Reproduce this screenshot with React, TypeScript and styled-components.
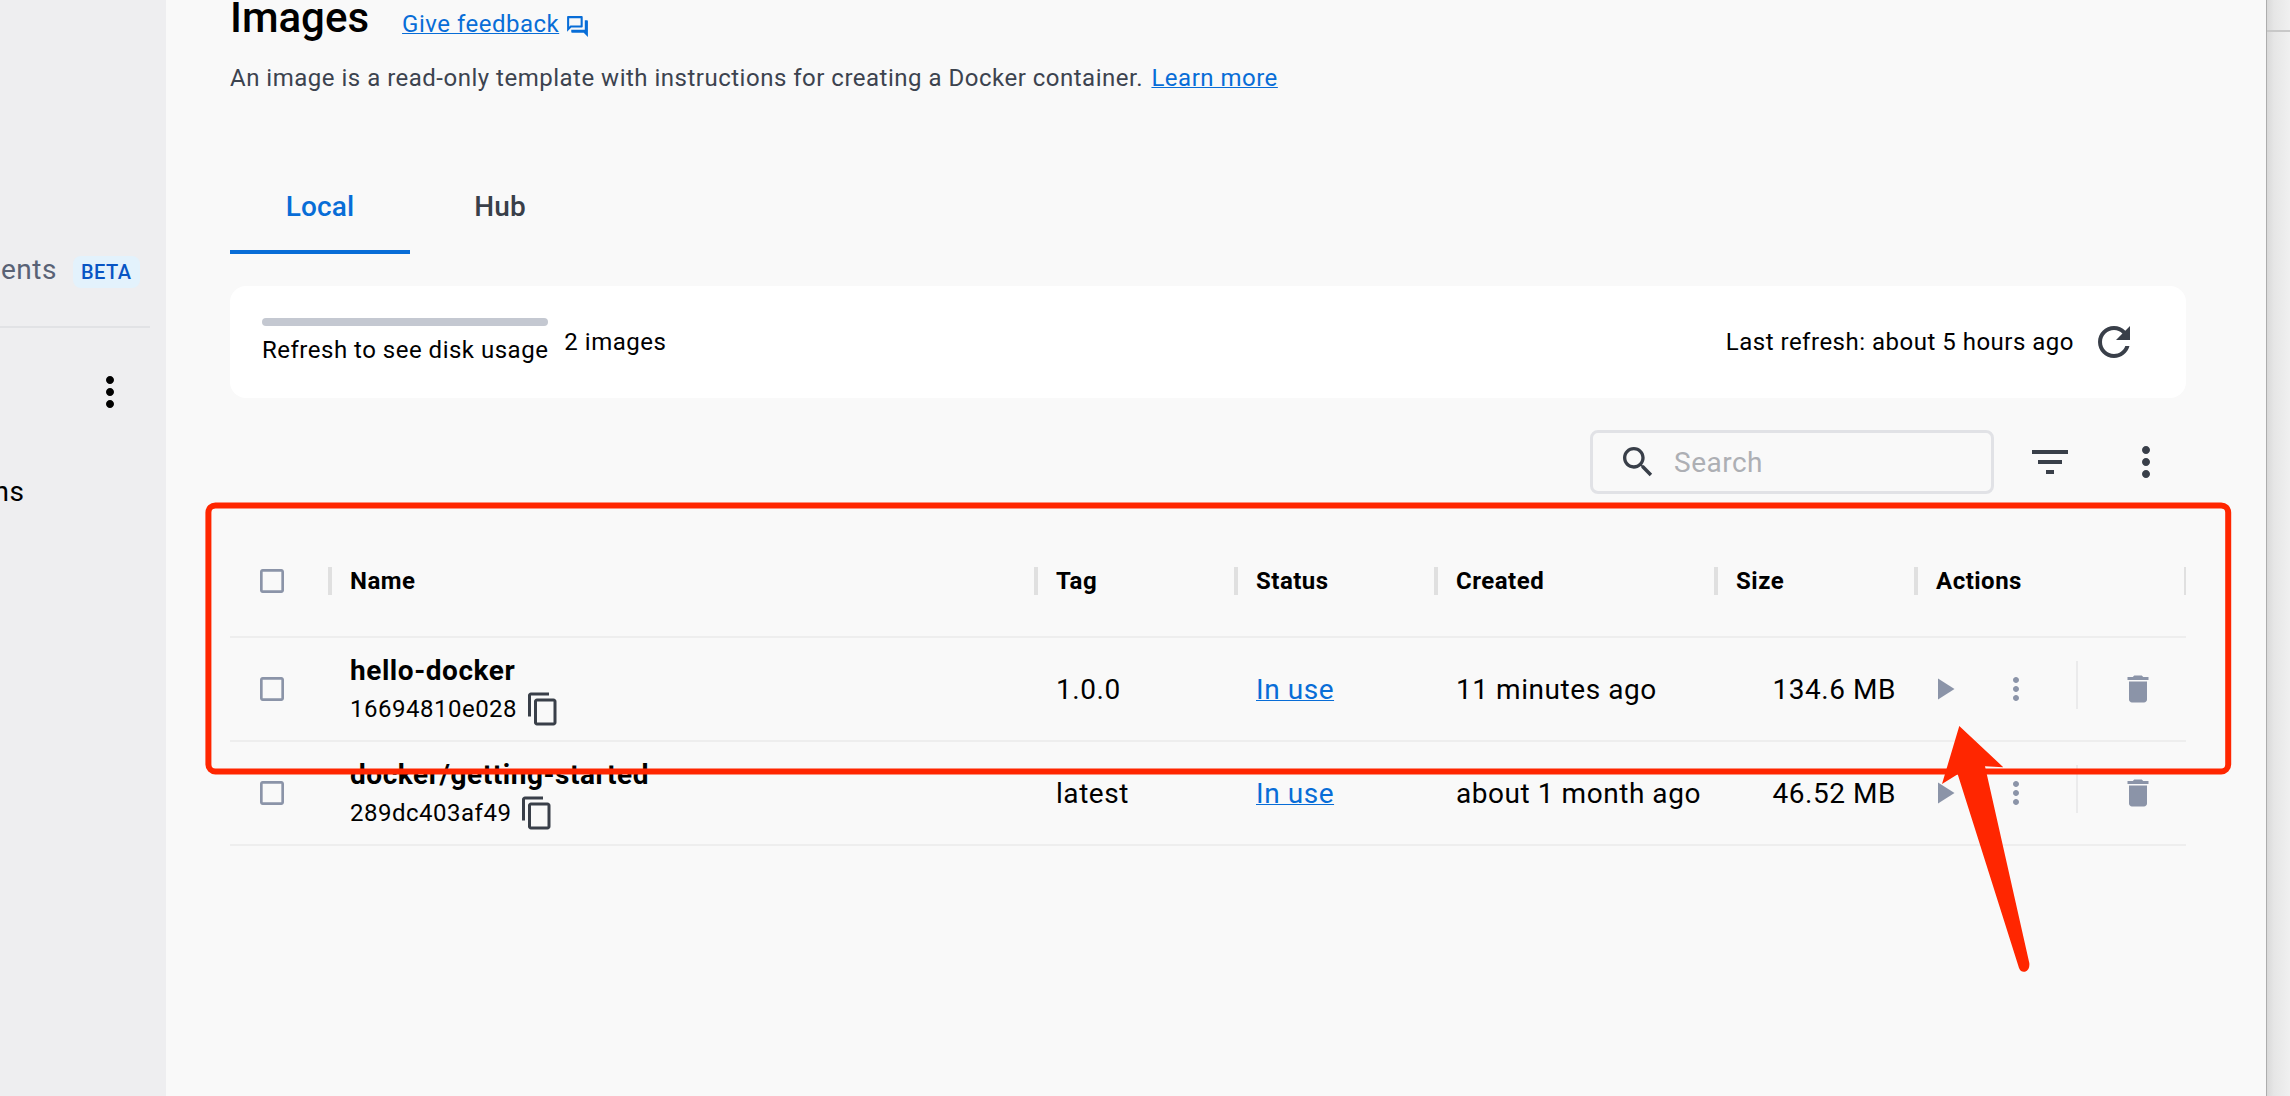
import React from "react";
import styled, { createGlobalStyle } from "styled-components";

const GlobalStyle = createGlobalStyle`
  * { box-sizing: border-box; }
  html, body { margin: 0; padding: 0; }
  body {
    font-family: Roboto, "Liberation Sans", sans-serif;
    font-size: 28px;
    letter-spacing: 0.5px;
    color: #000;
    background: #f9f9f9;
  }
`;

const Screen = styled.div`
  position: relative;
  display: flex;
  width: 2290px;
  height: 1096px;
  overflow: hidden;
`;

const Sidebar = styled.aside`
  display: flex;
  flex-direction: column;
  width: 166px;
  flex: none;
  padding-top: 248px;
  overflow: hidden;
  background: #eeeef0;
`;

const NavRow = styled.div`
  display: flex;
  align-items: center;
  gap: 16px;
  height: 48px;
  padding-left: 1px;
  color: #596275;
`;

const NavLabel = styled.span`
  padding-bottom: 5px;
`;

const Beta = styled.span`
  height: 32px;
  padding: 0 8px;
  border-radius: 8px;
  background: #e3f2fc;
  color: #0855c4;
  font-size: 20px;
  font-weight: 500;
  line-height: 33px;
`;

const SideDivider = styled.hr`
  width: 150px;
  height: 2px;
  margin: 30px 0 40px;
  border: 0;
  background: #e1e2e5;
`;

const SideMenu = styled.div`
  display: flex;
  height: 48px;
  padding-left: 86px;
`;

const SideItem = styled.div`
  margin: 59px 0 0 -6.5px;
  line-height: 33px;
`;

const Main = styled.main`
  width: 2100px;
  flex: none;
  padding: 0 80px 0 64px;
  background: #f9f9f9;
`;

const TitleRow = styled.header`
  display: flex;
  height: 50px;
`;

const Title = styled.h1`
  margin: 0 33px 0 0;
  font-size: 42px;
  font-weight: 500;
  line-height: 36px;
  letter-spacing: 0;
`;

const Link = styled.a`
  color: #086dd7;
  text-decoration: underline;
  text-decoration-thickness: 1px;
  text-underline-offset: 1px;
`;

const Feedback = styled.div`
  display: flex;
  align-items: flex-start;
  gap: 6px;
  padding-top: 10px;
  font-size: 24px;
  line-height: 29px;
`;

const FeedbackIcon = styled.span`
  display: flex;
  padding-top: 4px;
`;

const Subtitle = styled.p`
  margin: 0;
  padding-top: 14px;
  height: 122px;
  font-size: 24px;
  line-height: 29px;
  color: #3c434f;
`;

const LearnMore = styled(Link)`
  margin-left: 2px;
`;

const Tabs = styled.nav`
  display: flex;
  height: 82px;
`;

const Tab = styled.button<{ $active?: boolean }>`
  width: 180px;
  padding: 0 0 9px;
  border: 0;
  border-bottom: 4px solid ${(p) => (p.$active ? "#086dd7" : "transparent")};
  background: none;
  color: ${(p) => (p.$active ? "#086dd7" : "#393f49")};
  font: 500 28px Roboto, sans-serif;
  letter-spacing: 0.1px;
`;

const UsageCard = styled.section`
  display: flex;
  align-items: center;
  height: 112px;
  margin-top: 32px;
  padding: 0 48px 0 32px;
  border-radius: 16px;
  background: #fff;
  font-size: 24px;
  line-height: 32px;
`;

const DiskUsage = styled.div`
  display: flex;
  flex-direction: column;
  gap: 8px;
  margin-right: 16px;
`;

const UsageBar = styled.div`
  height: 8px;
  border-radius: 4px;
  background: #c4c8d1;
`;

const Refresh = styled.div`
  display: flex;
  align-items: center;
  gap: 16px;
  margin-left: auto;
`;

const Toolbar = styled.div`
  display: flex;
  align-items: center;
  justify-content: flex-end;
  height: 64px;
  margin-top: 32px;
  padding-right: 16px;
`;

const SearchBox = styled.div`
  display: flex;
  align-items: center;
  gap: 16px;
  width: 404px;
  height: 64px;
  margin-right: 32px;
  padding-left: 25px;
  border: 3px solid #e1e2e6;
  border-radius: 8px;
  color: #adafb4;
`;

const ToolButtons = styled.div`
  display: flex;
  gap: 48px;
`;

const Table = styled.div`
  margin-top: 32px;
  letter-spacing: 0.55px;
`;

const Row = styled.div<{ $head?: boolean }>`
  display: grid;
  grid-template-columns: 100px 706px 200px 200px 280px 200px 270px;
  height: ${(p) => (p.$head ? 112 : 104)}px;
  border-bottom: 2px solid #eeeeee;
`;

const HeadCell = styled.div<{ $first?: boolean }>`
  display: flex;
  align-items: center;
  font-size: 24px;
  font-weight: 700;
  letter-spacing: 0.5px;
  &::before,
  &::after {
    content: "";
    width: 2px;
    height: 28px;
    background: ${(p) => (p.$first ? "transparent" : "#e0e0e0")};
  }
  &::after {
    background: #e0e0e0;
  }
`;

const HeadLabel = styled.span`
  flex: 1;
  padding-left: 18px;
`;

const CheckSlot = styled.span`
  display: flex;
  flex: 1;
  padding-left: 24px;
`;

const Cell = styled.div<{ $end?: boolean }>`
  display: flex;
  align-items: center;
  justify-content: ${(p) => (p.$end ? "flex-end" : "flex-start")};
  padding: 0 20px;
  white-space: nowrap;
`;

const CheckCell = styled.div`
  display: flex;
  align-items: center;
  padding-left: 26px;
`;

const NameCell = styled.div`
  display: flex;
  flex-direction: column;
  padding: 16px 20px 0;
`;

const ImageName = styled.span`
  font-weight: 700;
  line-height: 34px;
`;

const ImageId = styled.span`
  display: flex;
  align-items: center;
  gap: 8px;
  height: 42px;
  font-size: 24px;
  letter-spacing: 0.5px;
`;

const ActionsCell = styled.div`
  display: flex;
  align-items: center;
  padding-left: 10px;
`;

const RowDivider = styled.span`
  width: 2px;
  height: 48px;
  margin: 0 42px 8px;
  background: #ebebec;
`;

const KebabSlot = styled.span`
  display: flex;
  margin-left: 36px;
`;

const Desktop = styled.aside`
  flex: 1;
  border-left: 1px solid #adadad;
  background: linear-gradient(90deg, #d9d9d9, #e6e6e6 30%, #f0f0f0);
`;

const DesktopLine = styled.div`
  height: 2px;
  margin-top: 30px;
  background: #c8c8c8;
`;

const Annotation = styled.svg`
  position: absolute;
  inset: 0;
  pointer-events: none;
`;

const icons = {
  more: "M12 8c1.1 0 2-.9 2-2s-.9-2-2-2-2 .9-2 2 .9 2 2 2zm0 2c-1.1 0-2 .9-2 2s.9 2 2 2 2-.9 2-2-.9-2-2-2zm0 6c-1.1 0-2 .9-2 2s.9 2 2 2 2-.9 2-2-.9-2-2-2z",
  refresh:
    "M17.65 6.35C16.2 4.9 14.21 4 12 4c-4.42 0-7.99 3.58-7.99 8s3.57 8 7.99 8c3.73 0 6.84-2.55 7.73-6h-2.08c-.82 2.33-3.04 4-5.65 4-3.31 0-6-2.69-6-6s2.69-6 6-6c1.66 0 3.14.69 4.22 1.78L13 11h7V4l-2.35 2.35z",
  search:
    "M15.5 14h-.79l-.28-.27C15.41 12.59 16 11.11 16 9.5 16 5.91 13.09 3 9.5 3S3 5.91 3 9.5 5.91 16 9.5 16c1.61 0 3.09-.59 4.23-1.57l.27.28v.79l5 4.99L20.49 19l-4.99-5zm-6 0C7.01 14 5 11.99 5 9.5S7.01 5 9.5 5 14 7.01 14 9.5 11.99 14 9.5 14z",
  filter: "M10 18h4v-2h-4v2zM3 6v2h18V6H3zm3 7h12v-2H6v2z",
  checkbox:
    "M19 5v14H5V5h14m0-2H5c-1.1 0-2 .9-2 2v14c0 1.1.9 2 2 2h14c1.1 0 2-.9 2-2V5c0-1.1-.9-2-2-2z",
  copy: "M16 1H4c-1.1 0-2 .9-2 2v14h2V3h12V1zm3 4H8c-1.1 0-2 .9-2 2v14c0 1.1.9 2 2 2h11c1.1 0 2-.9 2-2V7c0-1.1-.9-2-2-2zm0 16H8V7h11v14z",
  play: "M8 5v14l11-7z",
  trash: "M6 19c0 1.1.9 2 2 2h8c1.1 0 2-.9 2-2V7H6v12zM19 4h-3.5l-1-1h-5l-1 1H5v2h14V4z",
  chat: "M15 4v7H5.17L4 12.17V4h11m1-2H3c-.55 0-1 .45-1 1v14l4-4h10c.55 0 1-.45 1-1V3c0-.55-.45-1-1-1zm5 4h-2v9H6v2c0 .55.45 1 1 1h11l4 4V7c0-.55-.45-1-1-1z",
};

function Icon({ name, size, color }: { name: keyof typeof icons; size: number; color: string }) {
  return (
    <svg width={size} height={size} viewBox="0 0 24 24" fill={color} aria-hidden="true">
      <path d={icons[name]} />
    </svg>
  );
}

const columns = ["Name", "Tag", "Status", "Created", "Size", "Actions"];

const images = [
  { name: "hello-docker", id: "16694810e028", tag: "1.0.0", created: "11 minutes ago", size: "134.6 MB" },
  { name: "docker/getting-started", id: "289dc403af49", tag: "latest", created: "about 1 month ago", size: "46.52 MB" },
];

const slate = "#393f49";
const muted = "#8b94a8";

export default function App() {
  return (
    <Screen>
      <GlobalStyle />
      <Sidebar>
        <NavRow>
          <NavLabel>ents</NavLabel>
          <Beta>BETA</Beta>
        </NavRow>
        <SideDivider />
        <SideMenu>
          <Icon name="more" size={48} color="#000" />
        </SideMenu>
        <SideItem>ns</SideItem>
      </Sidebar>

      <Main>
        <TitleRow>
          <Title>Images</Title>
          <Feedback>
            <Link>Give feedback</Link>
            <FeedbackIcon>
              <Icon name="chat" size={25} color="#086dd7" />
            </FeedbackIcon>
          </Feedback>
        </TitleRow>
        <Subtitle>
          An image is a read-only template with instructions for creating a Docker container.{" "}
          <LearnMore>Learn more</LearnMore>
        </Subtitle>
        <Tabs>
          <Tab $active>Local</Tab>
          <Tab>Hub</Tab>
        </Tabs>

        <UsageCard>
          <DiskUsage>
            <UsageBar />
            <span>Refresh to see disk usage</span>
          </DiskUsage>
          <span>2 images</span>
          <Refresh>
            <span>Last refresh: about 5 hours ago</span>
            <Icon name="refresh" size={48} color={slate} />
          </Refresh>
        </UsageCard>

        <Toolbar>
          <SearchBox>
            <Icon name="search" size={40} color={slate} />
            <span>Search</span>
          </SearchBox>
          <ToolButtons>
            <Icon name="filter" size={48} color={slate} />
            <Icon name="more" size={48} color={slate} />
          </ToolButtons>
        </Toolbar>

        <Table>
          <Row $head>
            <HeadCell $first>
              <CheckSlot>
                <Icon name="checkbox" size={32} color={muted} />
              </CheckSlot>
            </HeadCell>
            {columns.map((label) => (
              <HeadCell key={label}>
                <HeadLabel>{label}</HeadLabel>
              </HeadCell>
            ))}
          </Row>
          {images.map((image) => (
            <Row key={image.id}>
              <CheckCell>
                <Icon name="checkbox" size={32} color={muted} />
              </CheckCell>
              <NameCell>
                <ImageName>{image.name}</ImageName>
                <ImageId>
                  {image.id}
                  <Icon name="copy" size={36} color={slate} />
                </ImageId>
              </NameCell>
              <Cell>{image.tag}</Cell>
              <Cell>
                <Link>In use</Link>
              </Cell>
              <Cell>{image.created}</Cell>
              <Cell $end>{image.size}</Cell>
              <ActionsCell>
                <Icon name="play" size={36} color={muted} />
                <KebabSlot>
                  <Icon name="more" size={36} color={muted} />
                </KebabSlot>
                <RowDivider />
                <Icon name="trash" size={36} color={muted} />
              </ActionsCell>
            </Row>
          ))}
        </Table>
      </Main>

      <Desktop>
        <DesktopLine />
      </Desktop>

      <Annotation width="2290" height="1096" viewBox="0 0 2290 1096">
        <rect x="208.4" y="505.4" width="2019.8" height="266" rx="7" fill="none" stroke="#ff2600" strokeWidth="6" />
        <path
          d="M1959.3 726 L2003.3 767.2 L1985 766.2 L2029.3 963 Q2030 970 2025 971.7 Q2021 972.6 2019 968 L1957.7 774.3 L1942 784 Z"
          fill="#ff2600"
        />
      </Annotation>
    </Screen>
  );
}
